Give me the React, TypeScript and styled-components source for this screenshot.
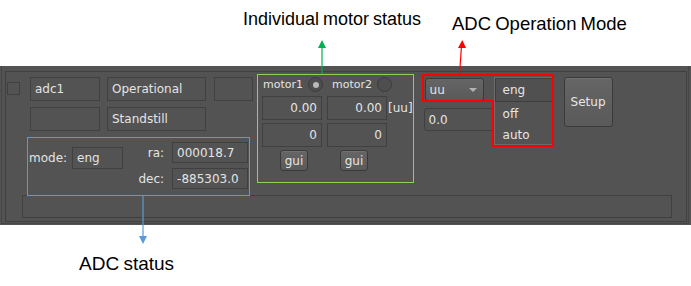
import React from 'react';
import styled, { createGlobalStyle } from 'styled-components';

const GlobalStyle = createGlobalStyle`
  html, body {
    margin: 0;
    padding: 0;
    background: #ffffff;
  }
  * {
    box-sizing: border-box;
  }
`;

const Page = styled.div`
  position: relative;
  width: 691px;
  height: 286px;
  overflow: hidden;
  background: #ffffff;
  font-family: 'DejaVu Sans', sans-serif;
`;

const Panel = styled.div`
  margin-top: 66px;
  height: 159px;
  padding: 0 2px 0 1px;
  background: #535353;
`;

const Shell = styled.div`
  height: 158px;
  border: 1px solid #454545;
  border-top: none;
  padding: 5px 1px 0 3px;
`;

const Frame = styled.div`
  border: 1px solid #404040;
  padding: 5px 0 3px 1px;
`;

const MainRow = styled.div`
  display: flex;
  align-items: flex-start;
  height: 112px;
`;

const LeftCol = styled.div`
  width: 247px;
  display: flex;
  flex-direction: column;
`;

const FieldGrid = styled.div`
  display: grid;
  grid-template-columns: 23px 77px 107px 39px;
  grid-template-rows: 24px 24px;
  row-gap: 6px;
`;

const Check = styled.div`
  width: 13px;
  height: 13px;
  margin-top: 5px;
  border: 1px solid #404040;
`;

const Field = styled.div<{ $w: number; $h?: number; $right?: boolean; $round?: boolean }>`
  width: ${(p) => p.$w}px;
  height: ${(p) => p.$h ?? 24}px;
  border: 1px solid #404040;
  border-radius: ${(p) => (p.$round ? 3 : 0)}px;
  display: flex;
  align-items: center;
  justify-content: ${(p) => (p.$right ? 'flex-end' : 'flex-start')};
  padding: 0 4px;
  color: #e4e4e4;
  font-size: 12px;
  white-space: nowrap;
`;

const StatusRow = styled.div`
  display: flex;
  align-items: flex-start;
  margin-top: 11px;
  margin-left: 22px;
`;

const Label = styled.div<{ $size?: number }>`
  display: flex;
  align-items: center;
  justify-content: flex-end;
  color: #e4e4e4;
  font-size: ${(p) => p.$size ?? 12}px;
  white-space: nowrap;
`;

const ModeGroup = styled.div`
  display: flex;
  align-items: center;
  gap: 5px;
  margin-top: 5px;
  height: 22px;
`;

const CoordGrid = styled.div`
  display: grid;
  grid-template-columns: 34px 76px;
  grid-template-rows: 21px 21px;
  column-gap: 8px;
  row-gap: 5px;
  margin-left: 7px;
`;

const MotorCol = styled.div`
  margin-left: 8px;
  display: flex;
  flex-direction: column;
`;

const MotorHeader = styled.div`
  display: flex;
  align-items: center;
  height: 15px;
  padding-left: 1px;
`;

const Radio = styled.div<{ $on?: boolean; $gap: number }>`
  width: 15px;
  height: 15px;
  margin-left: ${(p) => p.$gap}px;
  border-radius: 50%;
  border: 1px solid #3c3c3c;
  background: #4e4e4e;
  display: flex;
  align-items: center;
  justify-content: center;

  &::after {
    content: '';
    display: ${(p) => (p.$on ? 'block' : 'none')};
    width: 6px;
    height: 6px;
    border-radius: 50%;
    background: #b9b9b9;
  }
`;

const MotorGrid = styled.div`
  display: grid;
  grid-template-columns: 65px 61px auto;
  grid-template-rows: 24px 24px 21px;
  row-gap: 3px;
  margin-top: 4px;
`;

const Unit = styled.div`
  display: flex;
  align-items: center;
  color: #e4e4e4;
  font-size: 12px;
`;

const Button = styled.div<{ $w: number; $h: number; $offset?: number }>`
  width: ${(p) => p.$w}px;
  height: ${(p) => p.$h}px;
  margin-left: ${(p) => p.$offset ?? 0}px;
  border: 1px solid #3a3a3a;
  border-radius: 3px;
  background: linear-gradient(#656565, #5a5a5a);
  box-shadow: inset 0 1px 0 rgba(255, 255, 255, 0.08);
  display: flex;
  align-items: center;
  justify-content: center;
  color: #e6e6e6;
  font-size: 12px;
`;

const ComboCol = styled.div`
  margin-left: 11px;
  width: 70px;
  display: flex;
  flex-direction: column;
`;

const Combo = styled.div`
  width: 59px;
  height: 23px;
  margin: 1px 0 0 1px;
  border: 1px solid #3a3a3a;
  border-radius: 3px;
  background: linear-gradient(#656565, #5a5a5a);
  display: flex;
  align-items: center;
  justify-content: space-between;
  padding: 0 6px 0 4px;
  color: #e6e6e6;
  font-size: 12px;

  &::after {
    content: '';
    width: 0;
    height: 0;
    border-left: 4px solid transparent;
    border-right: 4px solid transparent;
    border-top: 4px solid #b3b3b3;
  }
`;

const ValueSlot = styled.div`
  margin-top: 7px;
`;

const List = styled.div`
  width: 60px;
  height: 68px;
  border: 1px solid #6c6c6c;
  display: flex;
  flex-direction: column;
`;

const ListItem = styled.div<{ $current?: boolean; $h: number }>`
  height: ${(p) => p.$h}px;
  border: 1px solid ${(p) => (p.$current ? '#3e3e3e' : 'transparent')};
  background: ${(p) => (p.$current ? '#505050' : 'transparent')};
  display: flex;
  align-items: center;
  padding-left: 7px;
  color: #e6e6e6;
  font-size: 12px;
`;

const SetupSlot = styled.div`
  margin-left: 10px;
`;

const BottomBar = styled.div`
  margin: 6px 0 0 15px;
  width: 650px;
  height: 23px;
  border: 1px solid #404040;
`;

/* annotation layer */

const Note = styled.div<{ $x: number; $y: number; $size: number }>`
  position: absolute;
  left: ${(p) => p.$x}px;
  top: ${(p) => p.$y}px;
  font-family: 'Liberation Sans', Arial, sans-serif;
  font-size: ${(p) => p.$size}px;
  line-height: 1;
  color: #000000;
  white-space: nowrap;
  word-spacing: -1px;
`;

const Callout = styled.div<{ $x: number; $y: number; $w: number; $h: number; $color: string }>`
  position: absolute;
  left: ${(p) => p.$x}px;
  top: ${(p) => p.$y}px;
  width: ${(p) => p.$w}px;
  height: ${(p) => p.$h}px;
  border: 1px solid ${(p) => p.$color};
  pointer-events: none;
`;

const Arrows = styled.svg`
  position: absolute;
  left: 0;
  top: 0;
  pointer-events: none;
`;

const App: React.FC = () => {
  return (
    <Page>
      <GlobalStyle />
      <Panel>
        <Shell>
          <Frame>
            <MainRow>
              <LeftCol>
                <FieldGrid>
                  <Check />
                  <Field $w={70}>adc1</Field>
                  <Field $w={99}>Operational</Field>
                  <Field $w={39} />
                  <div />
                  <Field $w={70} />
                  <Field $w={99}>Standstill</Field>
                </FieldGrid>
                <StatusRow>
                  <ModeGroup>
                    <Label>mode:</Label>
                    <Field $w={51} $h={22}>eng</Field>
                  </ModeGroup>
                  <CoordGrid>
                    <Label>ra:</Label>
                    <Field $w={76} $h={21}>000018.7</Field>
                    <Label>dec:</Label>
                    <Field $w={76} $h={21}>-885303.0</Field>
                  </CoordGrid>
                </StatusRow>
              </LeftCol>

              <MotorCol>
                <MotorHeader>
                  <Label $size={11}>motor1</Label>
                  <Radio $on $gap={5} />
                  <Label $size={11} style={{ marginLeft: 9 }}>motor2</Label>
                  <Radio $gap={5} />
                </MotorHeader>
                <MotorGrid>
                  <Field $w={60} $right>0.00</Field>
                  <Field $w={60} $right>0.00</Field>
                  <Unit>[uu]</Unit>
                  <Field $w={60} $right>0</Field>
                  <Field $w={60} $right>0</Field>
                  <div />
                  <Button $w={28} $h={21} $offset={18}>gui</Button>
                  <Button $w={28} $h={21} $offset={13}>gui</Button>
                </MotorGrid>
              </MotorCol>

              <ComboCol>
                <Combo>uu</Combo>
                <ValueSlot>
                  <Field $w={70} $h={23} $round>0.0</Field>
                </ValueSlot>
              </ComboCol>

              <List>
                <ListItem $current $h={24}>eng</ListItem>
                <ListItem $h={23}>off</ListItem>
                <ListItem $h={19}>auto</ListItem>
              </List>

              <SetupSlot>
                <Button $w={49} $h={50}>Setup</Button>
              </SetupSlot>
            </MainRow>
            <BottomBar />
          </Frame>
        </Shell>
      </Panel>

      <Callout $x={257} $y={74} $w={157} $h={109} $color="#92d050" />
      <Callout $x={27} $y={137} $w={223} $h={59} $color="#5b9bd5" />

      <Arrows width={691} height={286} viewBox="0 0 691 286">
        <line x1={322} y1={46} x2={322} y2={74} stroke="#00b050" strokeWidth={1.2} />
        <polygon points="318,48 326,48 322,40" fill="#00b050" />
        <line x1={461.5} y1={46} x2={459.5} y2={74} stroke="#ff0000" strokeWidth={1.2} />
        <polygon points="458,48 466,48 462.3,40" fill="#ff0000" />
        <path d="M423 75 H553 V146 H493 V101 H423 Z" fill="none" stroke="#ff0000" strokeWidth={2} />
        <line x1={143} y1={196} x2={143} y2={238} stroke="#5b9bd5" strokeWidth={1.2} />
        <polygon points="139,236 147,236 143,244" fill="#5b9bd5" />
      </Arrows>

      <Note $x={243} $y={10} $size={18}>Individual motor status</Note>
      <Note $x={452} $y={15} $size={18.5}>ADC Operation Mode</Note>
      <Note $x={79} $y={254} $size={19}>ADC status</Note>
    </Page>
  );
};

export default App;
